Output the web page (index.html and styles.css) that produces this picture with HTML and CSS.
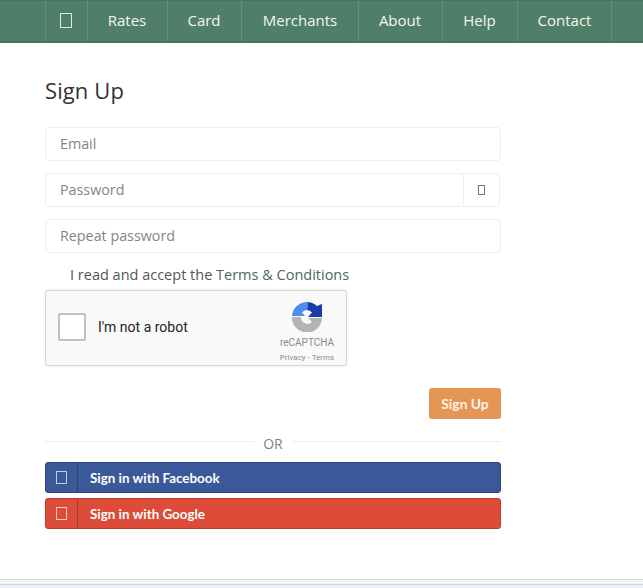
FILE: index.html
```
<!DOCTYPE html>
<html lang="en">
<head>
<meta charset="utf-8">
<title>Sign Up</title>
<link rel="stylesheet" href="styles.css">
</head>
<body>
<nav class="nav">
  <a class="nav-item nav-home"><span class="tofu tofu-nav"></span></a>
  <a class="nav-item nav-rates">Rates</a>
  <a class="nav-item nav-card">Card</a>
  <a class="nav-item nav-merchants">Merchants</a>
  <a class="nav-item nav-about">About</a>
  <a class="nav-item nav-help">Help</a>
  <a class="nav-item nav-contact">Contact</a>
</nav>
<main class="main">
  <h1 class="title">Sign Up</h1>
  <div class="field">Email</div>
  <div class="field field-group">
    <span class="field-text">Password</span>
    <span class="addon"><span class="tofu tofu-eye"></span></span>
  </div>
  <div class="field">Repeat password</div>
  <p class="terms">I read and accept the <a class="terms-link">Terms &amp; Conditions</a></p>
  <div class="captcha">
    <span class="captcha-box"></span>
    <span class="captcha-label">I'm not a robot</span>
    <div class="captcha-brand">
      <svg class="captcha-logo" viewBox="0 0 30 30" width="30" height="30">
        <path d="M16 0 L15 8 A7 7 0 0 0 10 10.500 L13 14 L0 14 A15 15 0 0 1 16 0 Z" fill="#4a8ff0"/>
        <path d="M16 0 A15 15 0 0 1 25 4 L30 2 L30 15 L16 15 L20 10.500 A7 7 0 0 0 15 8 Z" fill="#1c3aa9"/>
        <path d="M0 15 L9 15 A6.500 6.500 0 0 0 20 20 L16 16 L30 16 A15 15 0 0 1 0 15 Z" fill="#b4b4b4"/>
      </svg>
      <span class="captcha-name">reCAPTCHA</span>
      <span class="captcha-links">Privacy - Terms</span>
    </div>
  </div>
  <div class="submit-row"><a class="submit">Sign Up</a></div>
  <div class="or"><span class="or-line"></span><span class="or-text">OR</span><span class="or-line"></span></div>
  <a class="social social-fb"><span class="social-icon"><span class="tofu tofu-social"></span></span><span class="social-text">Sign in with Facebook</span></a>
  <a class="social social-g"><span class="social-icon"><span class="tofu tofu-social"></span></span><span class="social-text">Sign in with Google</span></a>
</main>
<footer class="footer"></footer>
</body>
</html>
```
FILE: styles.css
```
* { box-sizing: border-box; }
html, body { margin: 0; padding: 0; }
body {
  height: 588px;
  overflow: hidden;
  background: #fff;
  font-family: "Open Sans", sans-serif;
  color: #333;
  display: flex;
  flex-direction: column;
}
.nav {
  height: 43px;
  flex: none;
  display: flex;
  padding-left: 45px;
  background: #4f7f68;
  border-bottom: 2px solid #45735d;
  border-top: 1px solid #477560;
}
.nav-item {
  display: flex;
  align-items: center;
  justify-content: center;
  padding: 0 1px 2px 0;
  border-left: 1px solid #659079;
  color: #f2f8ee;
  font-size: 15px;
}
.nav-home { width: 42px; padding-right: 2px; }
.nav-rates { width: 80px; }
.nav-card { width: 74px; }
.nav-merchants { width: 117px; padding-right: 0; }
.nav-about { width: 84px; }
.nav-help { width: 75px; }
.nav-contact { width: 95px; padding-right: 0; border-right: 1px solid #659079; }
.tofu { display: block; border: 1px solid currentColor; }
.tofu-nav { width: 12px; height: 15px; color: #dfeae3; }
.main {
  flex: 1;
  width: 501px;
  margin-left: 45px;
  display: flex;
  flex-direction: column;
}
.title {
  margin: 31px 0 0;
  height: 53px;
  font-size: 22px;
  line-height: 32px;
  font-weight: 400;
  letter-spacing: .1px;
  color: #333;
}
.field {
  height: 34px;
  width: 456px;
  margin-bottom: 12px;
  padding-left: 14px;
  border: 1px solid #eceeee;
  border-radius: 4px;
  font-size: 14.300px;
  line-height: 32px;
  color: #858585;
}
.field-group {
  display: flex;
  padding-left: 0;
  width: 455px;
}
.field-text { flex: 1; padding-left: 14px; }
.addon {
  width: 36px;
  display: flex;
  align-items: center;
  justify-content: center;
  border-left: 1px solid #eceeee;
}
.tofu-eye { width: 7px; height: 10px; color: #777; }
.terms {
  margin: 0;
  padding-left: 25px;
  height: 25px;
  font-size: 14.500px;
  line-height: 20px;
  color: #555;
}
.terms-link { color: #4a6a5e; }
.captcha {
  width: 302px;
  height: 76px;
  display: flex;
  align-items: center;
  background: #f9f9f9;
  border: 1px solid #d6d6d6;
  border-radius: 3px;
  box-shadow: 0 0 3px rgba(0,0,0,.08);
  padding: 0 0 2px 12px;
}
.captcha-box {
  width: 28px;
  height: 28px;
  background: #fff;
  border: 2px solid #c1c1c1;
  border-radius: 2px;
}
.captcha-label {
  margin-left: 12px;
  font-family: Roboto, sans-serif;
  font-size: 14px;
  color: #222;
}
.captcha-brand {
  margin: 13px 4px 0 auto;
  width: 70px;
  display: flex;
  flex-direction: column;
  align-items: center;
  color: #8b8b8b;
  font-family: Roboto, sans-serif;
}
.captcha-logo { display: block; margin-bottom: 4px; }
.captcha-name { font-size: 10px; line-height: 14px; }
.captcha-links { font-size: 8px; line-height: 15px; }
.submit-row {
  display: flex;
  justify-content: flex-end;
  width: 456px;
  margin-top: 22px;
}
.submit {
  width: 72px;
  height: 31px;
  display: flex;
  align-items: center;
  justify-content: center;
  background: #e59554;
  border-radius: 3px;
  color: #fff4e6;
  font-family: Lato, sans-serif;
  font-weight: 700;
  font-size: 13.800px;
}
.or {
  width: 456px;
  height: 20px;
  margin-top: 14px;
  display: flex;
  align-items: center;
  gap: 9px;
}
.or-line { flex: 1; height: 1px; background: #eeeeee; margin-top: -3px; }
.or-text { font-size: 14px; color: #808080; }
.social {
  width: 456px;
  height: 31px;
  display: flex;
  align-items: center;
  border-radius: 3px;
  color: #fff;
  font-family: Lato, sans-serif;
  font-weight: 700;
  font-size: 13.400px;
  margin-bottom: 5px;
}
.or + .social { margin-top: 9px; }
.social-fb { background: #3b5998; border: 1px solid #2f477a; }
.social-g { background: #dd4b39; border: 1px solid #b93c2d; }
.social-icon {
  width: 32px;
  height: 100%;
  display: flex;
  align-items: center;
  justify-content: center;
  border-right: 1px solid rgba(0,0,0,.25);
}
.tofu-social { width: 11px; height: 13px; color: #fff; opacity: .7; }
.social-text { margin-left: 12px; }
.footer {
  flex: none;
  height: 9px;
  background: linear-gradient(#f1f6f5 0 4px, #cdd7ea 4px 5px, #eef2f7 5px);
  border-top: 1px solid #d9dcd0;
}
```
